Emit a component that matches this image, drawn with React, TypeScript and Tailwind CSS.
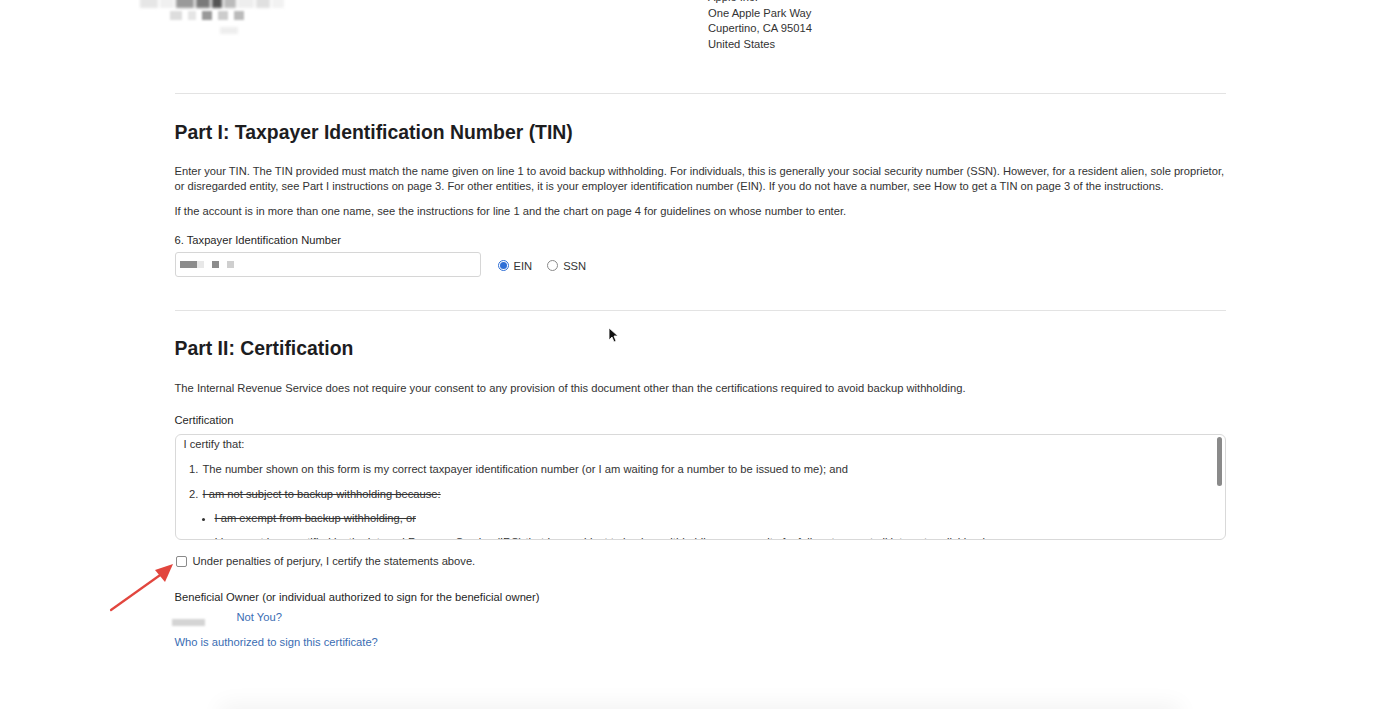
import React from "react";

const font = { fontFamily: '"Liberation Sans", Arial, sans-serif' };

function Radio({ checked, label }: { checked?: boolean; label: string }) {
  return (
    <label className="flex items-center gap-[5px] text-[11.2px] text-[#333]">
      {checked ? (
        <span className="flex h-[11px] w-[11px] items-center justify-center rounded-full border border-[#2f6fd6] bg-white">
          <span className="h-[7px] w-[7px] rounded-full bg-[#2f6fd6]" />
        </span>
      ) : (
        <span className="h-[11px] w-[11px] rounded-full border border-[#8a8a8a] bg-white" />
      )}
      <span>{label}</span>
    </label>
  );
}

export default function App() {
  return (
    <div className="relative h-[709px] w-full overflow-hidden bg-white text-[#333]" style={font}>
      <div className="mx-auto w-[1051px]">
        {/* Header */}
        <div className="-mt-[10px] grid grid-cols-2 gap-4">
          <div className="relative -ml-[35px] h-[48px]">
            <div className="flex gap-[2px] pt-[6px] blur-[1.5px]">
              <div className="h-[12px] w-[18px] bg-[#e6e6e6]" />
              <div className="h-[12px] w-[14px] bg-[#f0f0f0]" />
              <div className="h-[12px] w-[18px] bg-[#9a9a9a]" />
              <div className="h-[12px] w-[14px] bg-[#7a7a7a]" />
              <div className="h-[12px] w-[10px] bg-[#555]" />
              <div className="h-[12px] w-[12px] bg-[#bbb]" />
              <div className="h-[12px] w-[16px] bg-[#eee]" />
              <div className="h-[12px] w-[14px] bg-[#e0e0e0]" />
              <div className="h-[12px] w-[12px] bg-[#f2f2f2]" />
            </div>
            <div className="ml-[30px] mt-[3px] flex gap-[6px] blur-[1.2px]">
              <div className="h-[9px] w-[12px] bg-[#ddd]" />
              <div className="h-[9px] w-[8px] bg-[#e5e5e5]" />
              <div className="h-[9px] w-[10px] bg-[#999]" />
              <div className="h-[9px] w-[10px] bg-[#ccc]" />
              <div className="h-[9px] w-[10px] bg-[#bbb]" />
            </div>
            <div className="ml-[80px] mt-[7px] h-[7px] w-[18px] bg-[#eee] blur-[1.5px]" />
          </div>
          <div className="text-[11.2px] leading-[15.5px] text-[#333]">
            <div>Apple Inc.</div>
            <div>One Apple Park Way</div>
            <div>Cupertino, CA 95014</div>
            <div>United States</div>
          </div>
        </div>

        <div className="mt-[41px] border-t border-[#e3e3e3]" />

        {/* Part I */}
        <h2 className="mt-[27px] text-[19.4px] font-bold leading-[22px] text-[#1d1d1f]">
          Part I: Taxpayer Identification Number (TIN)
        </h2>
        <p className="mt-[21px] text-[11.15px] leading-[15px]">
          <span className="block whitespace-nowrap">
            Enter your TIN. The TIN provided must match the name given on line 1 to avoid backup withholding. For individuals, this is generally your social security number (SSN). However, for a resident alien, sole proprietor,
          </span>
          <span className="block whitespace-nowrap">
            or disregarded entity, see Part I instructions on page 3. For other entities, it is your employer identification number (EIN). If you do not have a number, see How to get a TIN on page 3 of the instructions.
          </span>
        </p>
        <p className="mt-[10px] text-[11.2px] leading-[15px]">
          If the account is in more than one name, see the instructions for line 1 and the chart on page 4 for guidelines on whose number to enter.
        </p>
        <div className="mt-[14px] text-[11.2px] leading-[15px] text-[#1f1f1f]">
          6. Taxpayer Identification Number
        </div>
        <div className="mt-[4px] flex items-center">
          <div className="flex h-[25px] w-[306px] items-center gap-[8px] rounded-[3px] border border-[#d6d6d6] px-[4px]">
            <div className="flex gap-0 blur-[0.6px]">
              <div className="h-[7px] w-[17px] bg-[#8c8c8c]" />
              <div className="h-[7px] w-[7px] bg-[#e8e8e8]" />
            </div>
            <div className="h-[7px] w-[7px] bg-[#8c8c8c] blur-[0.6px]" />
            <div className="h-[7px] w-[7px] bg-[#cfcfcf] blur-[0.6px]" />
          </div>
          <div className="ml-[17px] mt-[3px] flex items-center gap-[15px]">
            <Radio checked label="EIN" />
            <Radio label="SSN" />
          </div>
        </div>

        <div className="mt-[33px] border-t border-[#e3e3e3]" />

        {/* Part II */}
        <h2 className="mt-[26px] text-[19.4px] font-bold leading-[22px] text-[#1d1d1f]">Part II: Certification</h2>
        <p className="mt-[22px] text-[11.2px] leading-[15px]">
          The Internal Revenue Service does not require your consent to any provision of this document other than the certifications required to avoid backup withholding.
        </p>
        <div className="mt-[17px] text-[11.2px] leading-[15px] text-[#1f1f1f]">Certification</div>
        <div className="relative mt-[6px] h-[106px] overflow-hidden rounded-[6px] border border-[#d9d9d9] px-[8px] pt-[2px] text-[11.2px] leading-[15px]">
          <div>I certify that:</div>
          <ol className="mt-[10px] list-decimal pl-[18px]">
            <li className="pl-[1px]">
              The number shown on this form is my correct taxpayer identification number (or I am waiting for a number to be issued to me); and
            </li>
            <li className="mt-[10px] pl-[1px]">
              <span className="line-through">I am not subject to backup withholding because:</span>
              <ul className="mt-[9px] list-disc pl-[12px]">
                <li className="line-through">I am exempt from backup withholding, or</li>
                <li className="mt-[9px] line-through">
                  I have not been notified by the Internal Revenue Service (IRS) that I am subject to backup withholding as a result of a failure to report all interest or dividends, or
                </li>
              </ul>
            </li>
          </ol>
          <div className="absolute right-[3px] top-[2px] h-[49px] w-[5px] rounded-full bg-[#8a8a8a]" />
        </div>

        <label className="mt-[14px] flex items-center gap-[6px] text-[11.2px] leading-[15px]">
          <span className="ml-[1px] h-[11px] w-[11px] rounded-[2px] border border-[#8a8a8a] bg-white" />
          <span>Under penalties of perjury, I certify the statements above.</span>
        </label>

        <div className="mt-[21px] text-[11.2px] leading-[15px] text-[#1f1f1f]">
          Beneficial Owner (or individual authorized to sign for the beneficial owner)
        </div>
        <div className="mt-[5px] flex items-start text-[11.2px] leading-[15px]">
          <div className="-ml-[3px] mt-[9px] h-[7px] w-[33px] bg-[#d4d4d4] blur-[1px]" />
          <a className="ml-[32px] text-[#3a6db3]">Not You?</a>
        </div>
        <div className="mt-[9px] text-[11.2px] leading-[15px] text-[#3a6db3]">Who is authorized to sign this certificate?</div>

        <div className="mx-auto mt-[62px] h-[40px] w-[960px] bg-white shadow-[0_-8px_22px_rgba(0,0,0,0.05)]" />
      </div>

      {/* annotation arrow */}
      <svg className="pointer-events-none absolute left-[105px] top-[558px]" width="75" height="60" viewBox="0 0 75 60">
        <line x1="6" y1="52" x2="58" y2="15" stroke="#e2463e" strokeWidth="2.2" strokeLinecap="round" />
        <polygon points="68,6 50,12 60,24" fill="#e2463e" />
      </svg>

      {/* mouse cursor */}
      <svg className="pointer-events-none absolute left-[608px] top-[327px]" width="10" height="16" viewBox="0 0 10 16">
        <path d="M1 1 L1 13 L4 10 L6 15 L8 14 L6 9 L10 9 Z" fill="#111" stroke="#fff" strokeWidth="0.8" />
      </svg>
    </div>
  );
}
